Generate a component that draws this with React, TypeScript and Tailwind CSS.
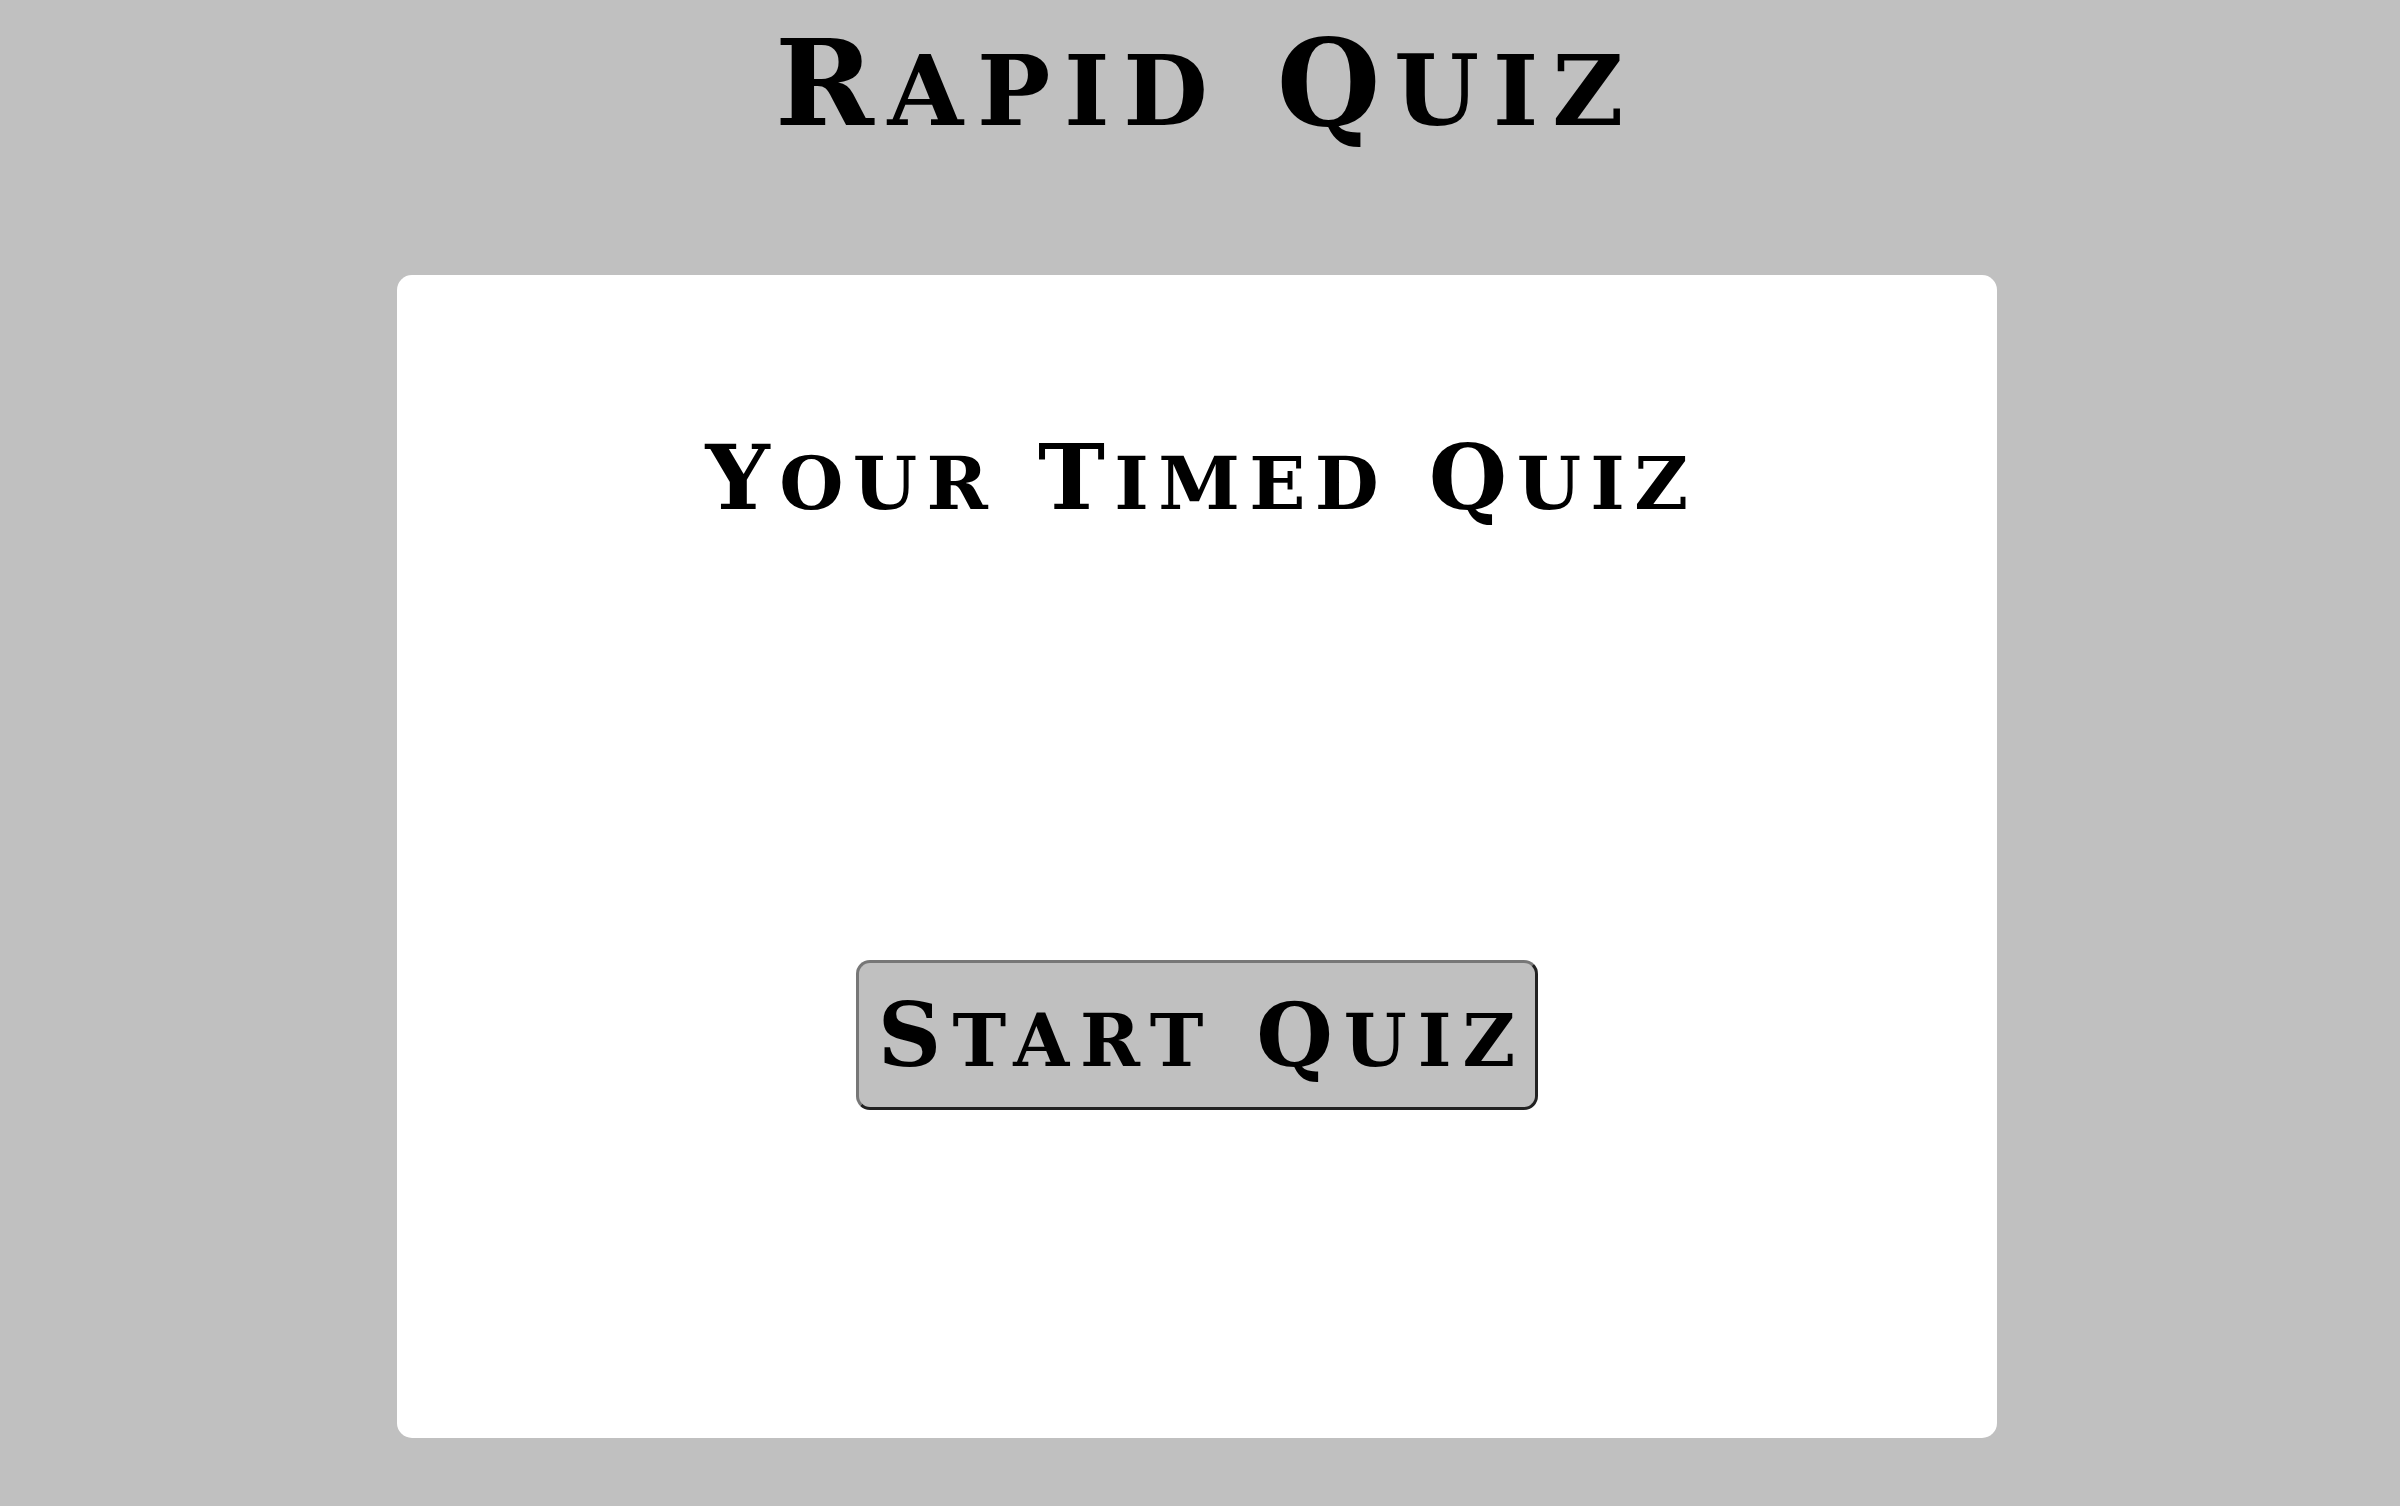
function Caps({ text }: { text: string }) {
  const words = text.split(" ");
  return (
    <>
      {words.map((w, i) => (
        <span key={i}>
          {i > 0 && " "}
          {w[0]}
          <span className="uppercase text-[0.82em]">{w.slice(1)}</span>
        </span>
      ))}
    </>
  );
}

export default function App() {
  return (
    <div className="min-h-screen bg-[#c0c0c0] font-['DejaVu_Serif',serif] font-bold text-black">
      <h1 className="pt-[24px] pl-[12px] text-center text-[119px] leading-none tracking-[0.115em]">
        <Caps text="Rapid Quiz" />
      </h1>

      <div className="ml-[397px] mt-[132px] flex h-[1163px] w-[1600px] flex-col items-center rounded-[15px] bg-white">
        <h2 className="pt-[157px] pl-[9px] text-center text-[90px] leading-none tracking-[0.104em]">
          <Caps text="Your Timed Quiz" />
        </h2>

        <button className="mt-[438px] w-[682px] rounded-[14px] border-[3px] border-t-[#777777] border-l-[#777777] border-r-[#222222] border-b-[#222222] bg-[#c0c0c0] py-[28px] pl-[10px] text-center text-[88px] leading-none tracking-[0.125em]">
          <Caps text="Start Quiz" />
        </button>
      </div>
    </div>
  );
}
